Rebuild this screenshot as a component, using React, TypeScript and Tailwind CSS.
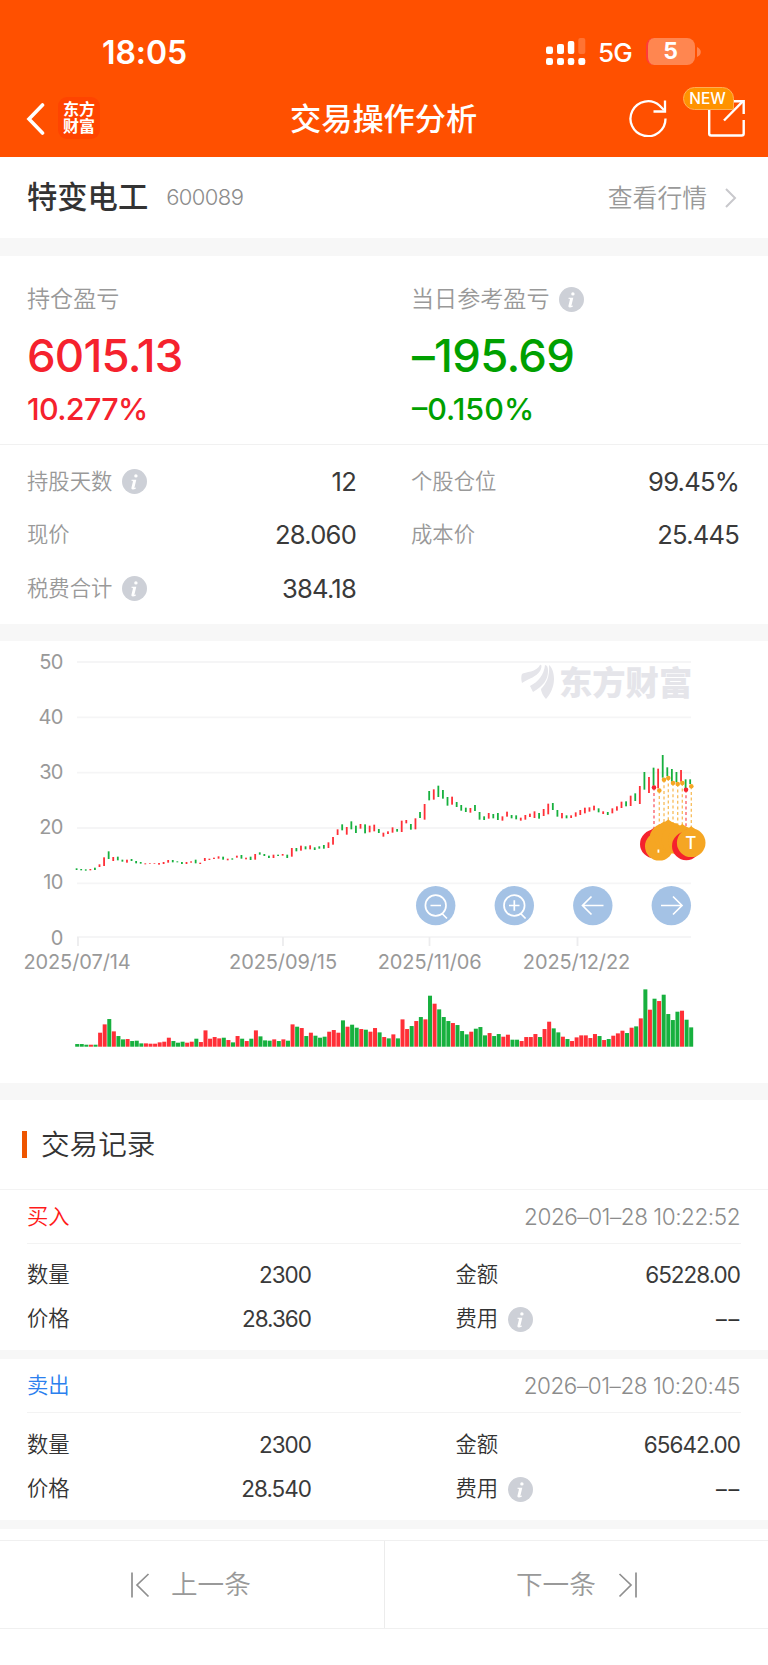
import React from "react";

const UP = "#ff2f37";
const DOWN = "#17b03e";

// One entry per trading day: r = closed up, g = closed down, then the bar height.
const DAYS = (
  "g8 g8 g6 r6 g6 r42 r67 g83 r46 g32 g22 r23 g17 g18 g10 r10 r9 r9 r13 r15 r27 g17 g12 g15 r12 r15 g24 r14 r49 r24 r29 r25 g27 r20 g13 r32 g24 r17 g24 r49 g31 g19 g18 r22 g17 r22 g18 r67 g60 r56 g32 r42 g33 g27 g30 r45 r50 r42 g79 r60 g66 g57 r53 g51 r45 r56 g43 r29 " +
  "g25 r37 g25 r82 r53 g62 r77 g89 r82 g153 r129 g112 g89 g77 r71 g65 g47 g37 r45 g54 g59 g34 r41 g32 g38 r30 r36 g21 g21 r17 r29 r29 r38 g29 r53 r75 g55 g43 r30 g23 r17 r28 r34 r34 r26 r38 g32 r20 g23 r33 r40 r48 g41 r57 g61 r85 g172 r111 g144 r137 g156 g98 g80 g105 r108 g81 g58"
).split(" ");

// High-low spans, in thirds of a pixel from the top of the plot.
const RANGES = (
  "685-690 687-691 688-692 687-691 683-690 673-681 652-678 634-657 651-663 650-661 659-665 659-668 657-663 663-670 666-671 670-673 669-671 669-671 669-674 666-672 660-668 660-667 664-667 666-672 666-672 664-668 659-670 668-672 654-663 656-660 653-657 649-656 650-659 656-661 655-659 647-653 645-656 653-658 650-660 642-659 637-644 642-648 647-654 644-654 644-648 642-647 644-654 624-650 624-634 617-632 619-628 616-628 622-630 619-626 615-626 607-624 591-614 568-585 553-571 561-584 544-568 557-579 552-566 553-580 557-577 554-574 567-579 578-590 " +
  "574-582 562-578 567-575 542-576 540-550 552-569 535-568 516-534 492-539 453-481 448-479 437-471 450-476 471-497 470-494 486-501 495-512 503-516 504-518 495-513 516-539 529-540 519-536 522-535 519-540 529-542 515-530 525-535 526-538 533-542 525-539 521-531 514-534 519-536 507-528 491-523 489-510 510-530 519-535 526-535 526-534 517-530 510-525 503-520 502-515 497-511 505-517 514-522 516-525 505-520 499-512 485-504 484-499 467-498 460-483 438-492 396-449 411-459 383-437 386-445 345-413 382-408 387-425 396-427 390-425 418-445 418-432"
).split(" ");

const PINS = [
  { x: 654, y: 146.5, gold: false, cx: 654.3, cy: 203 },
  { x: 659.3, y: 149.5, gold: true, cx: 659.3, cy: 205.3 },
  { x: 664, y: 138.7, gold: true, cx: 664, cy: 197 },
  { x: 668.3, y: 137, gold: true, cx: 668.3, cy: 195 },
  { x: 673, y: 142, gold: true, cx: 673, cy: 198 },
  { x: 677.7, y: 143, gold: true, cx: 676, cy: 198.5 },
  { x: 682.3, y: 142, gold: true, cx: 682.3, cy: 199.5 },
  { x: 686, y: 148.7, gold: false, cx: 686.3, cy: 205 },
  { x: 691.3, y: 145.3, gold: true, cx: 691.2, cy: 201.8 },
];

function Info() {
  return (
    <svg className="ml-[9.5px] size-[25px] shrink-0" viewBox="0 0 25 25">
      <circle cx="12.5" cy="12.5" r="12.5" fill="#cdd0d7" />
      <circle cx="13.9" cy="6.9" r="1.7" fill="#fff" />
      <path
        d="M9.6 10.8h4.7l-1.8 7.5c-.15.7.2.8 1.6.2l-.2.9c-1.1.7-2.1 1-3 1-1.3 0-1.7-.8-1.4-2l1.4-5.7c.1-.7-.2-.9-1.5-1z"
        fill="#fff"
      />
    </svg>
  );
}

function Header() {
  return (
    <header className="flex h-[157px] flex-col bg-[#ff5000] text-white">
      <div className="flex h-[78px] items-start justify-between pl-[102px] pr-[67px]">
        <span className="mt-[33px] text-[32px] leading-[40px] font-semibold tracking-[-0.1px]">18:05</span>
        <div className="flex items-start pt-[38px]">
          <svg width="40" height="28" viewBox="0 0 40 28" fill="#fff">
            <rect x="0" y="8.5" width="7" height="7.5" rx="2" />
            <rect x="11" y="6" width="7" height="10" rx="2" />
            <rect x="21.8" y="3" width="6.5" height="13" rx="2" />
            <rect x="32.3" y="0" width="7" height="16" rx="2" opacity=".2" />
            <rect x="0" y="20" width="7" height="7" rx="2.2" />
            <rect x="11" y="20" width="7" height="7" rx="2.2" />
            <rect x="21.8" y="20" width="6.5" height="7" rx="2.2" />
            <rect x="32.3" y="20" width="7" height="7" rx="2.2" />
          </svg>
          <span className="ml-[12px] w-[36px] text-[26px] leading-[30px] font-medium tracking-[-0.9px]">5G</span>
          <div className="ml-[12px] flex h-[27px] w-[49px] items-center justify-center overflow-hidden rounded-[8px] border-l-2 border-[#ff3a3a] bg-[#ff8650] pr-[2px] text-[23px] font-bold">
            5
          </div>
          <svg className="mt-[9px] ml-[2px]" width="4" height="10" viewBox="0 0 4 10">
            <path d="M0 0c5 2 5 8 0 10z" fill="#ff8650" />
          </svg>
        </div>
      </div>
      <div className="flex h-[79px] items-center pl-[26px] pr-[23px]">
        <svg className="mt-[2px]" width="20" height="32" viewBox="0 0 20 32" fill="none" stroke="#fff" strokeWidth="3.6">
          <path d="M16.5 2 3 16 16.5 30" strokeLinecap="round" strokeLinejoin="miter" />
        </svg>
        <div className="mt-[1px] ml-[12px] flex size-[42px] flex-col items-center justify-center rounded-[9px] bg-[#ff4400] text-[16px] leading-[17.5px] font-bold">
          <span>东方</span>
          <span>财富</span>
        </div>
        <h1 className="mt-[2px] ml-[190px] w-[189px] text-[31.2px] leading-[40px] font-medium whitespace-nowrap">交易操作分析</h1>
        <svg className="mt-[1px] ml-[150px]" width="38" height="38" viewBox="0 0 38 38" fill="none" stroke="#fff" strokeWidth="2.3">
          <path d="M36.5 19.5A17.5 17.5 0 1 1 30.5 6.5L35 11" />
          <path d="M36 1.5v11H24.5" />
        </svg>
        <div className="relative mt-[1px] ml-[40px]">
          <svg width="38" height="38" viewBox="0 0 38 38" fill="none" stroke="#fff" strokeWidth="2.4">
            <path d="M2.2 8v26.5q0 2 2 2h30.500q2 0 2-2V21" />
            <path d="M17 21.5 36 2.2" />
            <path d="M26 2.2h10.700V15" />
          </svg>
          <span className="absolute top-[-12px] left-[-24px] flex h-[23px] w-[51px] items-center justify-center rounded-[12px] rounded-br-[2px] border border-[#ffae55] bg-[#ff9300] pr-[2px] text-[15.5px] font-medium">
            NEW
          </span>
        </div>
      </div>
    </header>
  );
}

function StatRow({ label, value, info, right }: { label: string; value: string; info?: boolean; right?: boolean }) {
  return (
    <div className={right ? "flex h-[53.5px] items-center pl-[27px] pr-[29px]" : "flex h-[53.5px] items-center pl-[27px] pr-[28px]"}>
      <span className="mt-[1px] text-[21.33px] font-[350] text-[#999]">{label}</span>
      {info && <Info />}
      <span className="mt-[1px] ml-auto text-[25.6px] font-normal tracking-[-0.8px] text-[#3a3a3a]">{value}</span>
    </div>
  );
}

function Chart() {
  return (
    <svg className="block" width="768" height="442" viewBox="0 0 768 442" fill="none">
      {[21, 76.3, 131.6, 187, 242.3, 296].map((y) => (
        <path key={y} d={`M77 ${y}H691`} stroke="#f5f5f6" strokeWidth="1.8" />
      ))}
      {[78, 283, 429.5, 577.5].map((x) => (
        <path key={x} d={`M${x} 296v9`} stroke="#ececee" strokeWidth="1.8" />
      ))}
      <g fill="#999" fontSize="20" fontWeight="400" className="font-['Inter',sans-serif]">
        {[50, 40, 30, 20, 10, 0].map((n, i) => (
          <text key={n} x="62.5" y={28 + i * 55.1} textAnchor="end" letterSpacing="-0.8">
            {n}
          </text>
        ))}
        {[
          { d: "2025/07/14", x: 77 },
          { d: "2025/09/15", x: 283 },
          { d: "2025/11/06", x: 429.7 },
          { d: "2025/12/22", x: 576.5 },
        ].map(({ d, x }) => (
          <text key={d} x={x} y="328" textAnchor="middle" letterSpacing="-0.1">
            {d}
          </text>
        ))}
      </g>
      <g fill="#e5e5ea">
        <path d="M522 33c3-2 15-2 18-9 2-1 2 3 0 6-4 6-10 7-18 12-1-3-1-7 0-9z" />
        <path d="M530 45c8-4 14-11 15-21 2 0 3 2 3 6 0 9-5 15-15 21z" />
        <path d="M546 58c-2-2-5-7-5-10 5-5 9-12 8-24 3 2 5 8 5 14 0 8-4 16-8 20z" />
        <text x="559" y="53.5" fontSize="33.3" fontWeight="900" className="font-['Noto_Sans_CJK_SC',sans-serif]">
          东方财富
        </text>
      </g>
      {DAYS.map((d, i) => {
        const h = Number(d.slice(1)) / 3;
        const color = d[0] === "r" ? UP : DOWN;
        const [hi, lo] = RANGES[i].split("-").map((v) => Number(v) / 3 - 1);
        return (
          <g key={i}>
            <rect x={75.7 + i * 4.579} y={hi} width="1.8" height={lo - hi} fill={i === 68 ? UP : color} />
            <rect x={75.2 + i * 4.582} y={405.7 - h} width="4" height={h} fill={color} />
          </g>
        );
      })}
      {PINS.map((p, i) => {
        const c = p.gold ? "#f5a623" : "#f5222d";
        return (
          <g key={i}>
            <path d={`M${p.x} ${p.y}V${p.cy - 14}`} stroke={c} strokeOpacity="0.75" strokeWidth="1.3" strokeDasharray="3 2.6" />
            <circle cx={p.x} cy={p.y} r="2.3" fill={c} />
          </g>
        );
      })}
      {PINS.map((p, i) => (
        <g key={i} fill={p.gold ? "#f5a623" : "#f5222d"}>
          <circle cx={p.cx} cy={p.cy} r="14.3" />
          <path d={`M${p.cx - 5} ${p.cy - 13}L${p.cx} ${p.cy - 16.5}L${p.cx + 5} ${p.cy - 13}z`} />
        </g>
      ))}
      <rect x="657.5" y="208.5" width="1.8" height="3.2" fill="#fff" />
      <text x="690.7" y="208" fontSize="17" fontWeight="500" fill="#fff" textAnchor="middle" className="font-['Inter',sans-serif]">
        T
      </text>
      {[435.7, 514.3, 592.8, 671.3].map((x) => (
        <circle key={x} cx={x} cy="264.6" r="19.7" fill="#a4c2e5" />
      ))}
      <g stroke="#fff" strokeWidth="1.7">
        <circle cx="435.7" cy="264.5" r="10.3" />
        <path d="M430.5 264.5h10.5M442 272.5l5 5" />
        <circle cx="514.3" cy="264.5" r="10.3" />
        <path d="M509 264.5h10.5M514.3 259.2v10.5M520.6 272.5l5 5" />
        <path d="M603.5 264.5h-21M591.5 255.5l-9 9 9 9" />
        <path d="M661 264.5h21M673 255.5l9 9-9 9" />
      </g>
    </svg>
  );
}

function Amount({ children }: { children: string }) {
  return <span className="text-[22.5px] font-normal tracking-[-1px] text-[#3a3a3a]">{children}</span>;
}

function Trade({ side, time, amount, price }: { side: "buy" | "sell"; time: string; amount: string; price: string }) {
  const buy = side === "buy";
  return (
    <article className="text-[21.33px] font-[350] text-[#333]">
      <div className="mx-[27px] flex h-[54px] items-center justify-between border-b border-[#f3f3f3]">
        <span className={buy ? "text-[#ff1a1a]" : "text-[#2b80ee]"}>{buy ? "买入" : "卖出"}</span>
        <span className="mr-[1px] text-[22.5px] font-light tracking-[-0.45px] text-[#8c8c8c]">{time}</span>
      </div>
      <div
        className={
          buy
            ? "grid h-[106px] grid-cols-[284px_144.500px_1fr] grid-rows-[44px_44px] content-start items-center pt-[9px] pr-[28px] pl-[27px]"
            : "grid h-[107px] grid-cols-[284px_144.500px_1fr] grid-rows-[44px_44px] content-start items-center pt-[10px] pr-[28px] pl-[27px]"
        }
      >
        <div className="flex items-center justify-between">
          <span>数量</span>
          <Amount>2300</Amount>
        </div>
        <span />
        <div className="flex items-center justify-between">
          <span>金额</span>
          <Amount>{amount}</Amount>
        </div>
        <div className="flex items-center justify-between">
          <span>价格</span>
          <Amount>{price}</Amount>
        </div>
        <span />
        <div className="flex items-center">
          <span>费用</span>
          <Info />
          <span className="mt-[1px] mr-[-1px] ml-auto text-[21.5px] font-normal tracking-[1.8px]">––</span>
        </div>
      </div>
      <div className="h-[9px] bg-[#f7f7f7]" />
    </article>
  );
}

export default function App() {
  return (
    <div className="flex h-[1665px] w-[768px] flex-col overflow-hidden bg-white font-['Inter','Noto_Sans_CJK_SC',sans-serif]">
      <Header />
      <div className="flex h-[81px] items-center pl-[27px] pr-[31px]">
        <h2 className="mt-[1px] text-[30.3px] font-medium text-[#333]">特变电工</h2>
        <span className="ml-[18px] text-[22px] font-light tracking-[-0.6px] text-[#8c8c8c]">600089</span>
        <span className="mt-[2px] ml-auto text-[24.8px] font-[350] text-[#999]">查看行情</span>
        <svg className="ml-[17px]" width="13" height="20" viewBox="0 0 13 20" fill="none" stroke="#c8c8cc" strokeWidth="2">
          <path d="m2 1 9 9-9 9" />
        </svg>
      </div>
      <div className="h-[18px] bg-[#f7f7f7]" />
      <section className="grid h-[189px] grid-cols-2 border-b border-[#f1f1f1]">
        <div className="flex flex-col pt-[26px] pl-[27px] text-[#f5222d]">
          <span className="flex h-[35px] items-center text-[23.1px] font-[350] text-[#999]">持仓盈亏</span>
          <span className="mt-[9px] text-[45.5px] leading-[60px] font-medium tracking-[-0.8px]">6015.13</span>
          <span className="text-[30.5px] leading-[46px] font-medium tracking-[-0.65px]">10.277%</span>
        </div>
        <div className="flex flex-col pt-[26px] pl-[28px] text-[#00a000]">
          <span className="-ml-[1px] flex h-[35px] items-center text-[23.1px] font-[350] text-[#999]">
            当日参考盈亏
            <Info />
          </span>
          <span className="mt-[9px] text-[45.5px] leading-[60px] font-medium tracking-[-0.7px]">–195.69</span>
          <span className="text-[30.5px] leading-[46px] font-medium">–0.150%</span>
        </div>
      </section>
      <section className="grid h-[179px] grid-cols-2 content-start pt-[9.5px]">
        <StatRow label="持股天数" value="12" info />
        <StatRow label="个股仓位" value="99.45%" right />
        <StatRow label="现价" value="28.060" />
        <StatRow label="成本价" value="25.445" right />
        <StatRow label="税费合计" value="384.18" info />
      </section>
      <div className="h-[17px] bg-[#f7f7f7]" />
      <Chart />
      <div className="h-[17px] bg-[#f7f7f7]" />
      <div className="flex h-[90px] items-center border-b border-[#f3f3f3] pl-[22px]">
        <span className="h-[27px] w-[5px] bg-[#ee5500]" />
        <h2 className="mt-[2px] ml-[14px] text-[28.6px] font-[350] text-[#333]">交易记录</h2>
      </div>
      <Trade side="buy" time="2026–01–28 10:22:52" amount="65228.00" price="28.360" />
      <Trade side="sell" time="2026–01–28 10:20:45" amount="65642.00" price="28.540" />
      <nav className="mt-[11px] grid h-[89px] grid-cols-[385px_383px] border-y border-[#f0f0f0] text-[26.6px] font-[350] text-[#999]">
        <button className="flex items-center border-r border-[#ececec] pl-[130px]">
          <svg width="20" height="26" viewBox="0 0 20 26" fill="none" stroke="#8f8f8f" strokeWidth="1.7">
            <path d="M2 .5v25M18.5 2 7 13l11.5 11.5" />
          </svg>
          <span className="ml-[21px]">上一条</span>
        </button>
        <button className="flex items-center pl-[131px]">
          <span>下一条</span>
          <svg className="ml-[22px]" width="20" height="26" viewBox="0 0 20 26" fill="none" stroke="#8f8f8f" strokeWidth="1.7">
            <path d="M18 .5v25M1.5 2 13 13 1.5 24.5" />
          </svg>
        </button>
      </nav>
    </div>
  );
}
